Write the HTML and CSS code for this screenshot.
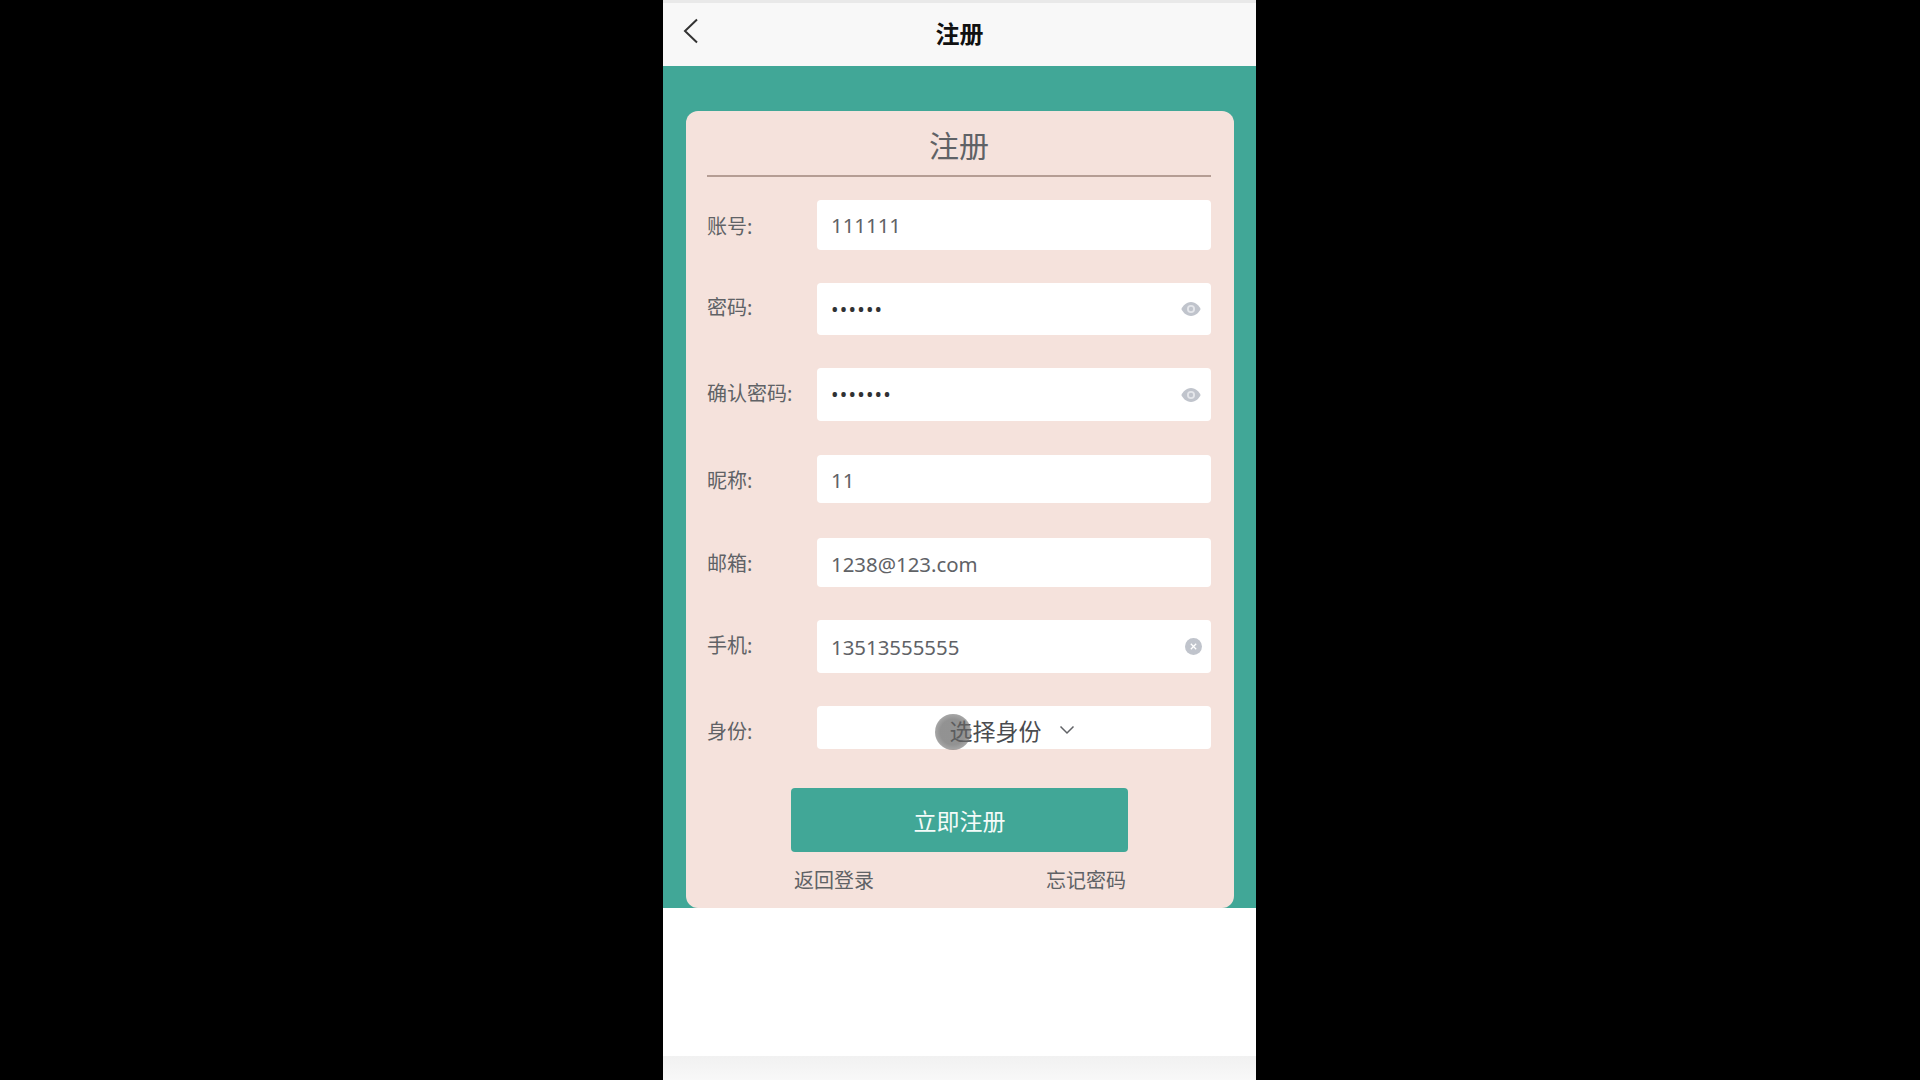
FILE: index.html
```html
<!DOCTYPE html>
<html lang="zh-CN">
<head>
  <meta charset="UTF-8">
  <title>注册</title>
  <link rel="stylesheet" href="styles.css">
</head>
<body>
  <div class="phone">
    <div class="topbar">
      <svg class="back" width="16" height="26" viewBox="0 0 16 26"><path d="M14 1.5 2 13l12 11.5" fill="none" stroke="#333" stroke-width="2"/></svg>
      <span class="topbar-title">注册</span>
    </div>

    <div class="main">
      <div class="card">
        <h2 class="card-title">注册</h2>

        <div class="field">
          <span class="field-label">账号:</span>
          <div class="field-box box-50"><span class="field-text">111111</span></div>
        </div>
        <div class="field">
          <span class="field-label lift">密码:</span>
          <div class="field-box box-52">
            <span class="field-dots">••••••</span>
            <svg class="eye" width="20" height="16" viewBox="0 0 20 16"><path d="M10 1C5.2 1 1.6 5 .4 8c1.2 3 4.8 7 9.6 7s8.4-4 9.6-7C18.4 5 14.8 1 10 1z" fill="#c0c4cc"/><circle cx="10" cy="8" r="4" fill="#e4e6ea"/><circle cx="10" cy="8" r="2.2" fill="#c0c4cc"/></svg>
          </div>
        </div>
        <div class="field gap-34">
          <span class="field-label lift">确认密码:</span>
          <div class="field-box box-53">
            <span class="field-dots">•••••••</span>
            <svg class="eye" width="20" height="16" viewBox="0 0 20 16"><path d="M10 1C5.2 1 1.6 5 .4 8c1.2 3 4.8 7 9.6 7s8.4-4 9.6-7C18.4 5 14.8 1 10 1z" fill="#c0c4cc"/><circle cx="10" cy="8" r="4" fill="#e4e6ea"/><circle cx="10" cy="8" r="2.2" fill="#c0c4cc"/></svg>
          </div>
        </div>
        <div class="field gap-35">
          <span class="field-label">昵称:</span>
          <div class="field-box box-48"><span class="field-text nudge">11</span></div>
        </div>
        <div class="field">
          <span class="field-label">邮箱:</span>
          <div class="field-box box-49"><span class="field-text nudge">1238@123.com</span></div>
        </div>
        <div class="field">
          <span class="field-label lift">手机:</span>
          <div class="field-box box-53">
            <span class="field-text">13513555555</span>
            <svg class="clear" width="17" height="17" viewBox="0 0 17 17"><circle cx="8.5" cy="8.5" r="8.5" fill="#c0c4cc"/><path d="M5.8 5.8l5.400 5.400M11.200 5.800l-5.400 5.400" stroke="#fff" stroke-width="1.3"/></svg>
          </div>
        </div>
        <div class="field">
          <span class="field-label drop">身份:</span>
          <div class="field-box box-43 select">
            <span class="select-text">选择身份</span>
            <svg class="chevron" width="16" height="10" viewBox="0 0 16 10"><path d="M1.5 1.5 8 8l6.5-6.500" fill="none" stroke="#606266" stroke-width="1.5"/></svg>
          </div>
        </div>

        <div class="actions">
          <button class="submit">立即注册</button>
          <div class="links">
            <a class="link">返回登录</a>
            <a class="link">忘记密码</a>
          </div>
        </div>
      </div>
    </div>

    <div class="blank"></div>
    <div class="bottom-strip"></div>

    <div class="touch-dot"></div>
  </div>
</body>
</html>
```

FILE: styles.css
```css
* {
  box-sizing: border-box;
}

html, body {
  height: 100%;
}

body {
  margin: 0;
  background-color: #000;
  display: flex;
  justify-content: center;
  font-family: "Noto Sans", "Noto Sans CJK SC", sans-serif;
  color: #606266;
}

.phone {
  position: relative;
  width: 593px;
  height: 1080px;
  margin-right: 1px;
  background-color: #fff;
  display: flex;
  flex-direction: column;
  overflow: hidden;
}

.topbar {
  position: relative;
  height: 66px;
  flex: none;
  padding-bottom: 5px;
  background-color: #f8f8f8;
  border-top: 3px solid #e9e9e9;
  display: flex;
  align-items: center;
  justify-content: center;
}

.back {
  position: absolute;
  left: 20px;
  top: 15px;
}

.topbar-title {
  font-size: 24px;
  font-weight: 700;
  color: #111;
}

.main {
  height: 842px;
  flex: none;
  background-color: #41a797;
  padding: 45px 22px 0 23px;
}

.card {
  height: 797px;
  background-color: #f5e2dc;
  border-radius: 12px;
  padding: 0 23px 0 21px;
}

.card-title {
  margin: 0 0 23px;
  height: 66px;
  line-height: 70px;
  text-align: center;
  font-size: 30px;
  font-weight: 400;
  color: #5f6266;
  border-bottom: 2px solid #b59d94;
}

.field {
  display: flex;
  align-items: center;
  margin-bottom: 33px;
}

.gap-34 {
  margin-bottom: 34px;
}

.gap-35 {
  margin-bottom: 35px;
}

.field-label {
  width: 110px;
  flex: none;
  font-size: 20px;
}

.lift {
  margin-top: -5px;
}

.drop {
  margin-top: 6px;
}

.field-box {
  flex: 1;
  display: flex;
  align-items: center;
  justify-content: space-between;
  padding: 0 9px 0 14px;
  background-color: #fff;
  border-radius: 4px;
}

.box-43 { height: 43px; }
.box-48 { height: 48px; }
.box-49 { height: 49px; }
.box-50 { height: 50px; }
.box-52 { height: 52px; }
.box-53 { height: 53px; }

.field-text {
  font-size: 20.4px;
  color: #606266;
}

.nudge {
  margin-top: 2px;
}

.field-dots {
  font-size: 20px;
  letter-spacing: 1.2px;
  color: #303133;
}

.eye {
  margin-right: 1px;
}

.select {
  justify-content: center;
  gap: 17px;
  padding: 4px 4px 0 0;
}

.select-text {
  font-size: 23px;
  color: #4a4c50;
}

.actions {
  margin: 39px 0 0 84px;
  width: 337px;
}

.submit {
  display: block;
  width: 100%;
  height: 64px;
  background-color: #41a797;
  color: #f4fbf9;
  border: none;
  border-radius: 4px;
  font-family: inherit;
  font-size: 23px;
  cursor: pointer;
}

.links {
  display: flex;
  justify-content: space-between;
  padding: 13px 2px 0 3px;
}

.link {
  font-size: 20px;
  color: #606266;
}

.bottom-strip {
  height: 24px;
  flex: none;
  background: linear-gradient(#f1f1f1, #f8f8f8);
}

.blank {
  flex: 1;
}

.touch-dot {
  position: absolute;
  left: 272px;
  top: 714px;
  width: 36px;
  height: 36px;
  border-radius: 50%;
  background: radial-gradient(circle, rgba(100, 100, 100, 0.7) 50%, rgba(120, 120, 120, 0.6) 78%, rgba(150, 150, 150, 0) 100%);
}
```
